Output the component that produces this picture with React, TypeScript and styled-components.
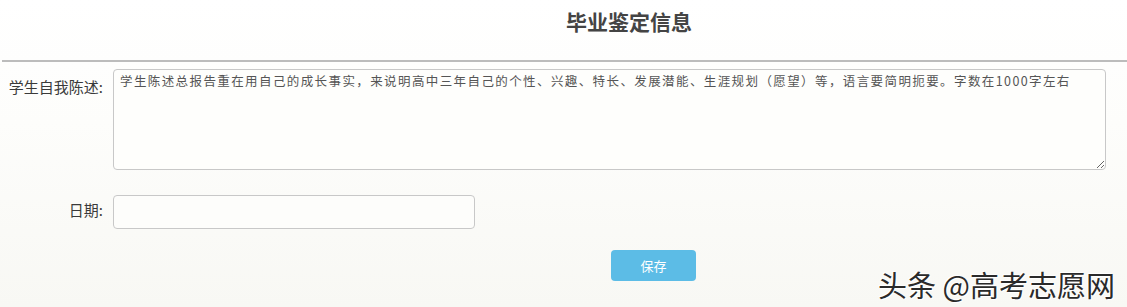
import { FC } from "react";
import styled, { createGlobalStyle } from "styled-components";

const GlobalStyle = createGlobalStyle`
  html, body {
    margin: 0;
    padding: 0;
  }
  body {
    width: 1127px;
    height: 307px;
    overflow: hidden;
    font-family: "Noto Sans CJK SC", "Noto Sans", sans-serif;
    background: linear-gradient(180deg, #ffffff 0%, #fdfdfb 40%, #f8f8f4 100%);
  }
`;

const App: FC = () => {
  return (
    <>
      <GlobalStyle />
      <StPage>
        <StTitle>毕业鉴定信息</StTitle>
        <StDivider />
        <StForm>
          <StRow $align="flex-start">
            <StLabel $offset={8}>学生自我陈述:</StLabel>
            <StTextarea
              defaultValue="学生陈述总报告重在用自己的成长事实，来说明高中三年自己的个性、兴趣、特长、发展潜能、生涯规划（愿望）等，语言要简明扼要。字数在1000字左右"
            />
          </StRow>
          <StRow $align="center">
            <StLabel $offset={0}>日期:</StLabel>
            <StInput type="text" />
          </StRow>
          <StRow $align="center">
            <StLabel $offset={0} />
            <StSaveButton>保存</StSaveButton>
          </StRow>
        </StForm>
        <StWatermark>头条 @高考志愿网</StWatermark>
      </StPage>
    </>
  );
};

export default App;

const StPage = styled.div`
  position: relative;
  width: 1127px;
  height: 307px;
`;

const StTitle = styled.h1`
  margin: 0;
  height: 60px;
  padding: 8px 0 0 566px;
  box-sizing: border-box;
  font-size: 21px;
  line-height: 26px;
  font-weight: bold;
  color: #444;
`;

const StDivider = styled.div`
  margin-left: 2px;
  height: 2px;
  background: #bcbcbc;
`;

const StForm = styled.div`
  display: flex;
  flex-direction: column;
  gap: 21px;
  padding-top: 7px;
`;

const StRow = styled.div<{ $align: string }>`
  display: flex;
  align-items: ${(p) => p.$align};
  gap: 10px;
`;

const StLabel = styled.label<{ $offset: number }>`
  width: 103px;
  flex-shrink: 0;
  margin-top: ${(p) => p.$offset}px;
  text-align: right;
  font-size: 15px;
  line-height: 20px;
  color: #3a3a3a;
`;

const StTextarea = styled.textarea`
  width: 993px;
  height: 101px;
  box-sizing: border-box;
  padding: 2px 6px;
  border: 1px solid #c8c8c8;
  border-radius: 4px;
  background: #fefefc;
  font-family: "Noto Sans CJK SC", sans-serif;
  font-size: 12.5px;
  letter-spacing: 1.4px;
  line-height: 18px;
  color: #555;
  resize: vertical;
  outline: none;
`;

const StInput = styled.input`
  width: 362px;
  height: 34px;
  box-sizing: border-box;
  margin-top: 4px;
  border: 1px solid #c8c8c8;
  border-radius: 4px;
  background: #fdfdfb;
  padding: 0 8px;
  outline: none;
`;

const StSaveButton = styled.button`
  margin-left: 498px;
  width: 85px;
  height: 31px;
  border: none;
  border-radius: 4px;
  background: #5cbce6;
  color: #fff;
  font-family: "Noto Sans CJK SC", sans-serif;
  font-size: 13px;
  cursor: pointer;
`;

const StWatermark = styled.div`
  position: absolute;
  right: 12px;
  bottom: 7px;
  font-family: "Noto Sans CJK SC", sans-serif;
  font-size: 29px;
  line-height: 32px;
  color: #2a2a2a;
  text-shadow: 1px 1px 0 #fff, -1px -1px 0 #fff;
`;
